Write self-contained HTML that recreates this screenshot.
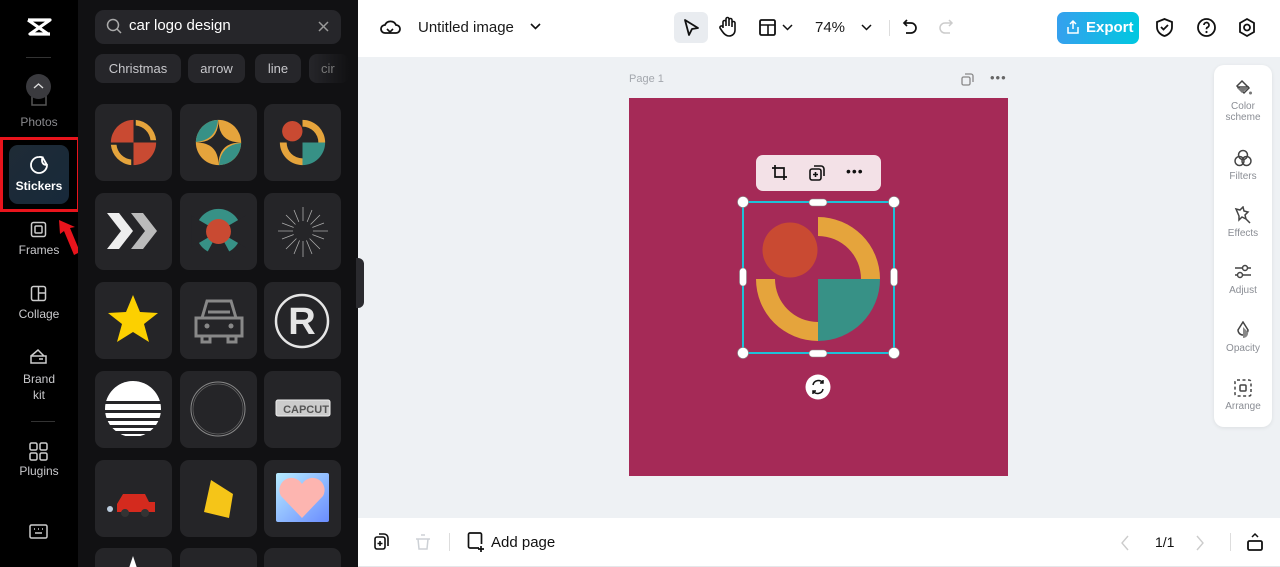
<!DOCTYPE html>
<html style="width:1280px;height:567px;overflow:hidden"><head><meta charset="utf-8"><style>
*{margin:0;padding:0;box-sizing:border-box}
html,body{width:1280px;height:567px;overflow:hidden}
body{font-family:"Liberation Sans",sans-serif;background:#eef1f4}
#root{position:relative;width:1280px;height:567px;overflow:hidden;background:#eef1f4}
.abs{position:absolute}
.rail{left:0;top:0;width:78px;height:567px;background:#000}
.panel{left:78px;top:0;width:280px;height:567px;background:#111113;overflow:hidden}
.ri{position:absolute;left:0;width:78px;text-align:center;color:#c9c9cc;font-size:12px}
.tile{position:absolute;width:77px;height:77px;background:#252528;border-radius:9px;overflow:hidden}
.chip{position:absolute;top:54px;height:29px;background:#26262a;border-radius:8px;color:#c8c8cc;font-size:13px;line-height:29px;text-align:center}
.rp{left:1214px;top:65px;width:58px;height:362px;background:#fff;border-radius:10px;box-shadow:0 1px 4px rgba(0,0,0,.08)}
.rpi{position:absolute;left:0;width:58px;text-align:center;color:#8a8d94;font-size:10px;line-height:11px}
.rpi svg{display:block;margin:0 auto 4px}
</style></head><body><div id="root">
<div class="abs" style="left:358px;top:0;width:922px;height:57px;background:#fff"></div>
<div class="abs" style="left:358px;top:518px;width:922px;height:49px;background:#fff;border-bottom:1px solid #e5e7ea"></div>

<div class="abs rail">
 <svg class="abs" style="left:26px;top:17px" width="26" height="20" viewBox="0 0 26 20"><path d="M2 3h22L4 17h20M2 3l20 14" stroke="#fff" stroke-width="3.2" fill="none" stroke-linejoin="round"/></svg>
 <div class="abs" style="left:26px;top:57px;width:25px;height:1px;background:#333"></div>
 <svg class="abs" style="left:31px;top:90px" width="16" height="16"><rect x="1" y="1" width="14" height="14" stroke="#555" fill="none" stroke-width="1.5"/></svg>
 <div class="abs" style="left:26px;top:74px;width:25px;height:25px;border-radius:50%;background:#3a3a3e"></div>
 <svg class="abs" style="left:33px;top:82px" width="11" height="8"><path d="M1 6l4.5-4 4.5 4" stroke="#ddd" fill="none" stroke-width="1.4"/></svg>
 <div class="ri" style="top:115px;color:#8a8a8e">Photos</div>
 <div class="abs" style="left:0;top:137px;width:80px;height:75px;border:3px solid #e8141c"></div>
 <div class="abs" style="left:9px;top:145px;width:60px;height:59px;border-radius:9px;background:linear-gradient(135deg,#1f2b36,#17293a)"></div>
 <svg class="abs" style="left:29px;top:155px" width="20" height="20" viewBox="0 0 20 20"><path d="M10 2a8 8 0 1 0 8 8c-3 0-5-1.5-5-5 0-1.2.3-2 .6-2.6A8 8 0 0 0 10 2zM13.6 2.4L18 10" stroke="#fff" fill="none" stroke-width="1.8"/></svg>
 <div class="ri" style="top:179px;color:#fff;font-weight:bold">Stickers</div>
 <svg class="abs" style="left:56px;top:217px" width="26" height="42" viewBox="0 0 26 42"><path d="M3 3l1 14 4-3 10 24 6-3-10-24 5-1z" fill="#e8141c"/></svg>
 <svg class="abs" style="left:30px;top:221px" width="17" height="17"><rect x="1.5" y="1.5" width="14" height="14" rx="2" stroke="#ccc" fill="none" stroke-width="1.5"/><rect x="5" y="5" width="7" height="7" rx="1" stroke="#ccc" fill="none" stroke-width="1.5"/></svg>
 <div class="ri" style="top:243px">Frames</div>
 <svg class="abs" style="left:30px;top:285px" width="17" height="17"><rect x="1.5" y="1.5" width="14" height="14" rx="2" stroke="#ccc" fill="none" stroke-width="1.5"/><path d="M8.5 1.5v14M8.5 8h7" stroke="#ccc" stroke-width="1.5"/></svg>
 <div class="ri" style="top:307px">Collage</div>
 <svg class="abs" style="left:29px;top:348px" width="19" height="17"><path d="M2 8h15v7H2zM2 8l7-6 6 6" stroke="#ccc" fill="none" stroke-width="1.5"/><path d="M10 11h4" stroke="#ccc" stroke-width="1.5"/></svg>
 <div class="ri" style="top:371px;line-height:16px">Brand<br>kit</div>
 <div class="abs" style="left:31px;top:421px;width:24px;height:1px;background:#333"></div>
 <svg class="abs" style="left:29px;top:442px" width="19" height="19"><g stroke="#ccc" fill="none" stroke-width="1.5"><rect x="1" y="1" width="7" height="7" rx="1.5"/><rect x="11" y="1" width="7" height="7" rx="1.5"/><rect x="1" y="11" width="7" height="7" rx="1.5"/><rect x="11" y="11" width="7" height="7" rx="1.5"/></g></svg>
 <div class="ri" style="top:464px">Plugins</div>
 <svg class="abs" style="left:29px;top:524px" width="19" height="16"><rect x="1" y="1" width="17" height="13" rx="1.5" stroke="#ccc" fill="none" stroke-width="1.5"/><path d="M5 5h1M9 5h1M13 5h1M6 9h7" stroke="#ccc" stroke-width="1.5"/></svg>
</div>

<div class="abs panel">
 <div class="abs" style="left:17px;top:10px;width:246px;height:34px;background:#26262a;border-radius:9px"></div>
 <svg class="abs" style="left:28px;top:18px" width="16" height="16"><circle cx="7" cy="7" r="5.5" stroke="#aaa" fill="none" stroke-width="1.5"/><path d="M11 11l4 4" stroke="#aaa" stroke-width="1.5"/></svg>
 <div class="abs" style="left:51px;top:17px;color:#fff;font-size:15px">car logo design</div>
 <svg class="abs" style="left:240px;top:21px" width="11" height="11"><path d="M1 1l9 9M10 1l-9 9" stroke="#999" stroke-width="1.5"/></svg>
 <div class="chip" style="left:17px;width:86px">Christmas</div>
 <div class="chip" style="left:110px;width:57px">arrow</div>
 <div class="chip" style="left:177px;width:46px">line</div>
 <div class="chip" style="left:231px;width:40px;text-align:left;padding-left:12px;background:linear-gradient(90deg,#26262a,#111113);color:#777">cir</div>

 <div class="tile" style="left:17px;top:104px"><svg width="77" height="77" viewBox="-1.7 -1.7 3.4 3.4"><path d="M0,-1A1,1 0 0 0 -1,0L0,0Z" fill="#c94a32"/><path d="M0,0L1,0A1,1 0 0 1 0,1Z" fill="#c94a32"/><path d="M0.1,-1A1,1 0 0 1 1,-0.1L0.75,-0.1A0.72,0.72 0 0 0 0.1,-0.75Z" fill="#e5a43c"/><path d="M-1,0.1A1,1 0 0 0 -0.1,1L-0.1,0.75A0.72,0.72 0 0 1 -0.75,0.1Z" fill="#e5a43c"/></svg></div>
 <div class="tile" style="left:102px;top:104px"><svg width="77" height="77" viewBox="-1.7 -1.7 3.4 3.4"><circle r="1" fill="#e5a43c"/><path d="M-1,-0.02A1,1 0 0 1 -0.02,-1Q-0.1,-0.1 -1,-0.02Z" fill="#379186"/><path d="M1,0.02A1,1 0 0 1 0.02,1Q0.1,0.1 1,0.02Z" fill="#379186"/><path d="M-1,0Q0,0 0,-1Q0,0 1,0Q0,0 0,1Q0,0 -1,0Z" fill="#252528"/></svg></div>
 <div class="tile" style="left:186px;top:104px"><svg width="77" height="77" viewBox="-1.7 -1.7 3.4 3.4"><path d="M0,-1A1,1 0 0 1 1,0L0.7,0A0.7,0.7 0 0 0 0,-0.7Z" fill="#e5a43c"/><path d="M-1,0A1,1 0 0 0 0,1L0,0.7A0.7,0.7 0 0 1 -0.7,0Z" fill="#e5a43c"/><path d="M0,0L1,0A1,1 0 0 1 0,1Z" fill="#379186"/><circle cx="-0.45" cy="-0.5" r="0.45" fill="#c94a32"/></svg></div>
 <div class="tile" style="left:17px;top:193px"><svg width="77" height="77"><path d="M12 20h12l14 18-14 18H12l14-18z" fill="#eee"/><path d="M36 20h12l14 18-14 18H36l14-18z" fill="#bbb"/></svg></div>
 <div class="tile" style="left:102px;top:193px"><svg width="77" height="77" viewBox="-1.7 -1.7 3.4 3.4"><circle r="1" fill="#379186"/><path d="M0,0L-1.2,-0.7L-1.2,0.7ZM0,0L1.2,-0.7L1.2,0.7ZM0,0L-0.7,1.3L0.7,1.3Z" fill="#252528"/><circle r="0.55" fill="#c94a32"/></svg></div>
 <div class="tile" style="left:186px;top:193px"><svg width="77" height="77"><g stroke="#aaa" stroke-width=".8" fill="none"><path d="M14 38h50M39 14v50M22 22l34 34M56 22L22 56M18 30l42 16M18 46l42-16M30 17l18 44M48 17L30 61"/></g><circle cx="39" cy="38" r="10" fill="#252528"/></svg></div>
 <div class="tile" style="left:17px;top:282px"><svg width="77" height="77"><path d="M38 13l7 17 18 1-14 11 5 18-16-10-16 10 5-18-14-11 18-1z" fill="#fcd000"/></svg></div>
 <div class="tile" style="left:102px;top:282px"><svg width="77" height="77"><g stroke="#888" stroke-width="3" fill="none"><path d="M22 36l5-17h24l5 17M16 36h46v18H16zM22 54v6h8v-6M48 54v6h8v-6M28 30h22"/></g><circle cx="27" cy="44" r="2.5" fill="#888"/><circle cx="51" cy="44" r="2.5" fill="#888"/></svg></div>
 <div class="tile" style="left:186px;top:282px"><svg width="77" height="77"><circle cx="38" cy="39" r="26" stroke="#e5e5e5" stroke-width="2.5" fill="none"/><text x="38" y="52" text-anchor="middle" font-family="Liberation Sans" font-weight="bold" font-size="38" fill="#e5e5e5">R</text></svg></div>
 <div class="tile" style="left:17px;top:371px"><svg width="77" height="77"><clipPath id="c1"><circle cx="38" cy="38" r="28"/></clipPath><g clip-path="url(#c1)" fill="#fff"><rect x="8" y="8" width="60" height="22"/><rect x="8" y="33" width="60" height="6"/><rect x="8" y="42" width="60" height="5"/><rect x="8" y="50" width="60" height="4"/><rect x="8" y="57" width="60" height="3"/><rect x="8" y="63" width="60" height="2"/></g></svg></div>
 <div class="tile" style="left:102px;top:371px"><svg width="77" height="77"><circle cx="38" cy="38" r="27" stroke="#888" fill="none"/><circle cx="38" cy="38" r="25" stroke="#666" fill="none" stroke-width=".7"/></svg></div>
 <div class="tile" style="left:186px;top:371px"><svg width="77" height="77"><rect x="12" y="29" width="54" height="16" rx="2" fill="#ccc" stroke="#eee"/><text x="42" y="42" text-anchor="middle" font-family="Liberation Sans" font-weight="bold" font-size="11" fill="#555">CAPCUT</text></svg></div>
 <div class="tile" style="left:17px;top:460px"><svg width="77" height="77"><path d="M22 44l6-10h22l4 8h6v10H22z" fill="#d42a1e"/><circle cx="30" cy="53" r="4" fill="#333"/><circle cx="50" cy="53" r="4" fill="#333"/><circle cx="15" cy="49" r="3" fill="#bcd"/></svg></div>
 <div class="tile" style="left:102px;top:460px"><svg width="77" height="77"><path d="M31 20l22 14-4 24-25-6z" fill="#f5c518"/></svg></div>
 <div class="tile" style="left:186px;top:460px"><svg width="77" height="77"><defs><linearGradient id="hg" x1="0" y1="0" x2="1" y2="1"><stop offset="0" stop-color="#b7ecff"/><stop offset="1" stop-color="#6a8cff"/></linearGradient></defs><rect x="12" y="13" width="53" height="49" rx="2" fill="url(#hg)"/><path d="M38 58L17 36a10 10 0 0 1 21-12a10 10 0 0 1 21 12z" fill="#fdb5b0"/></svg></div>
 <div class="tile" style="left:17px;top:548px"><svg width="77" height="77"><path d="M38 8l4 12h-8z" fill="#fff"/></svg></div>
 <div class="tile" style="left:102px;top:548px"></div>
 <div class="tile" style="left:186px;top:548px"></div>
</div>
<div class="abs" style="left:356px;top:258px;width:8px;height:50px;background:#2a2a2e;border-radius:0 6px 6px 0"></div>

<svg class="abs" style="left:380px;top:18px" width="21" height="18"><path d="M5 15a4 4 0 0 1 0-8 6 6 0 0 1 11 0 4 4 0 0 1 0 8z" stroke="#111" stroke-width="1.8" fill="none"/><path d="M7 11l3 3 3-3" stroke="#111" stroke-width="1.6" fill="none"/></svg>
<div class="abs" style="left:418px;top:19px;font-size:15px;color:#1a1a1a">Untitled image</div>
<svg class="abs" style="left:530px;top:23px" width="11" height="8"><path d="M1 1l4.5 4.5L10 1" stroke="#111" stroke-width="1.6" fill="none"/></svg>
<div class="abs" style="left:674px;top:12px;width:34px;height:31px;border-radius:6px;background:#e9ecf0"></div>
<svg class="abs" style="left:683px;top:18px" width="17" height="20"><path d="M2 2l13 8-6 1-3 6z" stroke="#111" stroke-width="1.8" fill="none" stroke-linejoin="round"/></svg>
<svg class="abs" style="left:718px;top:16px" width="20" height="22"><path d="M5 12V6a1.5 1.5 0 0 1 3 0v4V3a1.5 1.5 0 0 1 3 0v7V4a1.5 1.5 0 0 1 3 0v7-4a1.5 1.5 0 0 1 3 0v7c0 4-3 6-6 6s-5-2-7-5l-2-3a1.5 1.5 0 0 1 3-1z" stroke="#111" stroke-width="1.6" fill="none"/></svg>
<svg class="abs" style="left:759px;top:19px" width="17" height="17"><rect x="1" y="1" width="15" height="15" rx="1.5" stroke="#111" stroke-width="1.8" fill="none"/><path d="M1 6h15M9 6v10" stroke="#111" stroke-width="1.6"/></svg>
<svg class="abs" style="left:782px;top:24px" width="11" height="7"><path d="M1 1l4.5 4.5L10 1" stroke="#111" stroke-width="1.5" fill="none"/></svg>
<div class="abs" style="left:815px;top:19px;font-size:15px;color:#1a1a1a">74%</div>
<svg class="abs" style="left:861px;top:24px" width="11" height="7"><path d="M1 1l4.5 4.5L10 1" stroke="#111" stroke-width="1.5" fill="none"/></svg>
<div class="abs" style="left:889px;top:20px;width:1px;height:16px;background:#ddd"></div>
<svg class="abs" style="left:902px;top:18px" width="16" height="18"><path d="M5 2L2 5l3 3M2 5h7a5 5 0 0 1 0 10H4" stroke="#111" stroke-width="1.7" fill="none"/></svg>
<svg class="abs" style="left:938px;top:18px" width="16" height="18"><path d="M11 2l3 3-3 3M14 5H7a5 5 0 0 0 0 10h5" stroke="#ccc" stroke-width="1.5" fill="none"/></svg>
<div class="abs" style="left:1057px;top:12px;width:82px;height:32px;border-radius:7px;background:linear-gradient(90deg,#35a0ee,#00c8e0)"></div>
<svg class="abs" style="left:1066px;top:19px" width="14" height="16"><path d="M7 10V2M4 5l3-3 3 3M2 8v6h10V8" stroke="#fff" stroke-width="1.5" fill="none"/></svg>
<div class="abs" style="left:1086px;top:19px;font-size:15px;color:#fff;font-weight:bold">Export</div>
<svg class="abs" style="left:1155px;top:17px" width="19" height="21"><path d="M9.5 2L2 5v5c0 5 4 8 7.5 9 3.5-1 7.5-4 7.5-9V5z" stroke="#111" stroke-width="1.8" fill="none"/><path d="M6 10l2.5 2.5L13 8" stroke="#111" stroke-width="1.8" fill="none"/></svg>
<svg class="abs" style="left:1196px;top:17px" width="21" height="21"><circle cx="10.5" cy="10.5" r="8.5" stroke="#111" stroke-width="1.8" fill="none"/><path d="M8 8a2.5 2.5 0 1 1 3.5 2.3c-1 .4-1 1-1 2" stroke="#111" stroke-width="1.7" fill="none"/><circle cx="10.5" cy="15" r="1.1" fill="#111"/></svg>
<svg class="abs" style="left:1237px;top:17px" width="20" height="21"><path d="M10 2l7 4v9l-7 4-7-4V6z" stroke="#111" stroke-width="1.8" fill="none"/><circle cx="10" cy="10.5" r="3" stroke="#111" stroke-width="1.8" fill="none"/></svg>

<div class="abs" style="left:629px;top:73px;font-size:11px;color:#a3a7ad">Page 1</div>
<svg class="abs" style="left:961px;top:73px" width="13" height="13"><rect x="1" y="4" width="8" height="8" rx="1.5" stroke="#888" fill="none" stroke-width="1.3"/><path d="M4 1h6a2 2 0 0 1 2 2v6" stroke="#888" fill="none" stroke-width="1.3"/></svg>
<div class="abs" style="left:990px;top:70px;font-size:13px;color:#666;letter-spacing:1px">•••</div>
<div class="abs" style="left:629px;top:98px;width:379px;height:378px;background:#a52a57"></div>
<svg class="abs" style="left:629px;top:98px" width="379" height="378">
 <g transform="translate(189,181)">
  <path d="M0,-62A62,62 0 0 1 62,0L43,0A43,43 0 0 0 0,-43Z" fill="#e5a43c"/>
  <path d="M-62,0A62,62 0 0 0 0,62L0,43A43,43 0 0 1 -43,0Z" fill="#e5a43c"/>
  <path d="M0,0L62,0A62,62 0 0 1 0,62Z" fill="#379186"/>
  <circle cx="-28" cy="-29" r="27.5" fill="#c94a32"/>
 </g>
 <rect x="114" y="104" width="151" height="151" fill="none" stroke="#1ec0d8" stroke-width="2"/>
 <g fill="#fff" stroke="#888" stroke-width=".6">
  <circle cx="114" cy="104" r="5.5"/><circle cx="265" cy="104" r="5.5"/><circle cx="114" cy="255" r="5.5"/><circle cx="265" cy="255" r="5.5"/>
  <rect x="180" y="101" width="18" height="7" rx="3.5"/><rect x="180" y="252" width="18" height="7" rx="3.5"/>
  <rect x="110.5" y="170" width="7" height="18" rx="3.5"/><rect x="261.5" y="170" width="7" height="18" rx="3.5"/>
 </g>
 <circle cx="189" cy="289" r="12.5" fill="#fff"/>
 <path d="M184 287a5.5 5.5 0 0 1 10-2M194 291a5.5 5.5 0 0 1-10 2M194 282v3h-3M184 296v-3h3" stroke="#111" stroke-width="1.5" fill="none"/>
</svg>
<div class="abs" style="left:756px;top:155px;width:125px;height:36px;background:#f3e1e7;border-radius:7px"></div>
<svg class="abs" style="left:771px;top:164px" width="18" height="18"><path d="M4 1v12h12M1 4h12v12" stroke="#111" stroke-width="1.7" fill="none"/></svg>
<svg class="abs" style="left:808px;top:164px" width="18" height="18"><rect x="2" y="5" width="11" height="11" rx="2" stroke="#111" stroke-width="1.6" fill="none"/><path d="M6 2h7a3 3 0 0 1 3 3v7M7.5 8v5M5 10.5h5" stroke="#111" stroke-width="1.6" fill="none"/></svg>
<div class="abs" style="left:846px;top:163px;font-size:14px;color:#111;letter-spacing:1px">•••</div>

<div class="abs rp">
 <div class="rpi" style="top:14px"><svg width="20" height="18"><path d="M9 2l7 7-5 5-7-7zM4 8h12" stroke="#444" stroke-width="1.5" fill="none"/><path d="M4 9l5 5 6-5z" fill="#777"/><circle cx="17.5" cy="14" r="1.5" fill="#777"/></svg>Color<br>scheme</div>
 <div class="rpi" style="top:84px"><svg width="20" height="18"><g stroke="#444" stroke-width="1.5" fill="none"><circle cx="10" cy="6" r="4.5"/><circle cx="6.5" cy="12" r="4.5"/><circle cx="13.5" cy="12" r="4.5"/></g></svg>Filters</div>
 <div class="rpi" style="top:141px"><svg width="20" height="18"><path d="M3 3l4 1 3-3 1 4 4 1-3 3 1 4-4-2-3 3v-4z M12 12l5 5" stroke="#444" stroke-width="1.5" fill="none"/></svg>Effects</div>
 <div class="rpi" style="top:198px"><svg width="20" height="18"><g stroke="#444" stroke-width="1.5" fill="none"><path d="M2 5h16M2 12h16"/><circle cx="12" cy="5" r="2.5" fill="#fff"/><circle cx="7" cy="12" r="2.5" fill="#fff"/></g></svg>Adjust</div>
 <div class="rpi" style="top:256px"><svg width="20" height="18"><path d="M10 1l5 8a5 5 0 1 1-10 0z" stroke="#444" stroke-width="1.5" fill="none"/><path d="M10 6v11a5 5 0 0 0 5-6z" fill="#888"/></svg>Opacity</div>
 <div class="rpi" style="top:314px"><svg width="20" height="18"><rect x="2" y="1" width="16" height="16" rx="2" stroke="#444" stroke-width="1.5" stroke-dasharray="3 2.5" fill="none"/><rect x="7" y="6" width="6" height="6" rx="1" stroke="#444" stroke-width="1.5" fill="none"/></svg>Arrange</div>
</div>

<svg class="abs" style="left:374px;top:533px" width="16" height="18"><rect x="1" y="4" width="10" height="12" rx="2" stroke="#111" stroke-width="1.6" fill="none"/><path d="M5 1h5a4 4 0 0 1 4 4v8M6 8v5M3.5 10.5h5" stroke="#111" stroke-width="1.6" fill="none"/></svg>
<svg class="abs" style="left:415px;top:533px" width="16" height="18"><path d="M3 6h10l-1 10H4zM1 6h14M6 2h4" stroke="#cdd1d6" stroke-width="1.5" fill="none"/></svg>
<div class="abs" style="left:449px;top:533px;width:1px;height:18px;background:#ddd"></div>
<svg class="abs" style="left:467px;top:532px" width="18" height="21"><path d="M12 16H3a1.5 1.5 0 0 1-1.5-1.5v-12A1.5 1.5 0 0 1 3 1h10a1.5 1.5 0 0 1 1.5 1.5V12M14 14v6M11 17h6" stroke="#111" stroke-width="1.7" fill="none"/></svg>
<div class="abs" style="left:491px;top:534px;font-size:15px;color:#111">Add page</div>
<svg class="abs" style="left:1120px;top:535px" width="10" height="16"><path d="M8 1L2 8l6 7" stroke="#ccc" stroke-width="1.4" fill="none"/></svg>
<div class="abs" style="left:1155px;top:534px;font-size:14px;color:#111">1/1</div>
<svg class="abs" style="left:1195px;top:535px" width="10" height="16"><path d="M2 1l6 7-6 7" stroke="#ccc" stroke-width="1.4" fill="none"/></svg>
<div class="abs" style="left:1230px;top:533px;width:1px;height:18px;background:#ddd"></div>
<svg class="abs" style="left:1246px;top:532px" width="18" height="20"><path d="M6 5l3-3 3 3" stroke="#111" stroke-width="1.5" fill="none"/><rect x="2" y="9" width="14" height="9" rx="1.5" stroke="#111" stroke-width="1.8" fill="none"/></svg>
</div></body></html>
